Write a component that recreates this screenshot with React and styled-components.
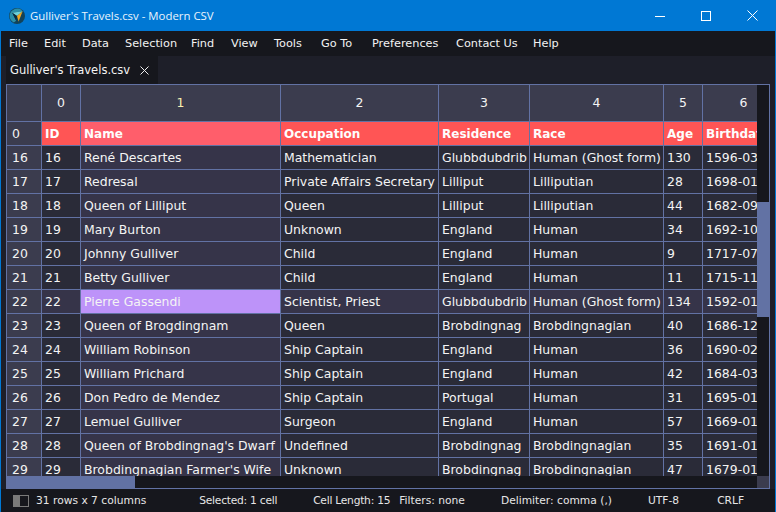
import React from "react";
import styled, { createGlobalStyle } from "styled-components";

const Global = createGlobalStyle`
  html, body { margin: 0; padding: 0; background: #16171d; }
  * { box-sizing: border-box; }
`;

const COLS = [35, 39, 200, 158, 91, 134, 39, 82];

const MENU = [
  ["File", 35], ["Edit", 38], ["Data", 43], ["Selection", 66], ["Find", 40], ["View", 43],
  ["Tools", 47], ["Go To", 51], ["Preferences", 84], ["Contact Us", 77], ["Help", 26],
];

const HEAD = ["ID", "Name", "Occupation", "Residence", "Race", "Age", "Birthdate"];
const ROWS = [
  ["16", "René Descartes", "Mathematician", "Glubbdubdrib", "Human (Ghost form)", "130", "1596-03-31"],
  ["17", "Redresal", "Private Affairs Secretary", "Lilliput", "Lilliputian", "28", "1698-01-01"],
  ["18", "Queen of Lilliput", "Queen", "Lilliput", "Lilliputian", "44", "1682-09-01"],
  ["19", "Mary Burton", "Unknown", "England", "Human", "34", "1692-10-01"],
  ["20", "Johnny Gulliver", "Child", "England", "Human", "9", "1717-07-01"],
  ["21", "Betty Gulliver", "Child", "England", "Human", "11", "1715-11-01"],
  ["22", "Pierre Gassendi", "Scientist, Priest", "Glubbdubdrib", "Human (Ghost form)", "134", "1592-01-22"],
  ["23", "Queen of Brogdingnam", "Queen", "Brobdingnag", "Brobdingnagian", "40", "1686-12-01"],
  ["24", "William Robinson", "Ship Captain", "England", "Human", "36", "1690-02-01"],
  ["25", "William Prichard", "Ship Captain", "England", "Human", "42", "1684-03-01"],
  ["26", "Don Pedro de Mendez", "Ship Captain", "Portugal", "Human", "31", "1695-01-01"],
  ["27", "Lemuel Gulliver", "Surgeon", "England", "Human", "57", "1669-01-01"],
  ["28", "Queen of Brobdingnag's Dwarf", "Undefined", "Brobdingnag", "Brobdingnagian", "35", "1691-01-01"],
  ["29", "Brobdingnagian Farmer's Wife", "Unknown", "Brobdingnag", "Brobdingnagian", "47", "1679-01-01"],
];

const Window = styled.div`
  width: 776px;
  height: 512px;
  display: flex;
  flex-direction: column;
  overflow: hidden;
  background: #1e1f29;
  border: 1px solid #0078d4;
  border-top: 0;
  border-bottom: 0;
  font-family: "DejaVu Sans", sans-serif;
  font-size: 12.45px;
  color: #f4f4f4;
`;
const TitleBar = styled.div`
  height: 31px;
  flex: none;
  display: flex;
  align-items: center;
  background: #0078d4;
  padding-left: 8px;
`;
const TitleText = styled.div`
  margin-left: 5px;
  font-family: "Open Sans", sans-serif;
  font-size: 11.4px;
  color: #eaf4fc;
  flex: 1;
`;
const WinButton = styled.button`
  width: 46px;
  height: 31px;
  padding: 0;
  border: 0;
  background: none;
  display: flex;
  align-items: center;
  justify-content: center;
`;
const MenuBar = styled.div`
  height: 25px;
  flex: none;
  display: flex;
  align-items: center;
  background: #16171d;
  padding-left: 8px;
`;
const MenuItem = styled.span`
  width: ${(p) => p.$w}px;
  font-size: 11.3px;
  color: #f2f2f2;
`;
const TabBar = styled.div`
  height: 28px;
  flex: none;
  display: flex;
  background: #1e1f29;
  padding-left: 5px;
`;
const Tab = styled.div`
  width: 152px;
  display: flex;
  align-items: center;
  background: #16171d;
  padding-left: 4px;
  gap: 10px;
  font-size: 11.5px;
`;
const GridFrame = styled.div`
  margin: 0 5px;
  height: 405px;
  flex: none;
  display: grid;
  grid-template-columns: 750px 12px;
  grid-template-rows: 391px 12px;
  border: 1px solid #6272a4;
  background: #16171d;
`;
const Viewport = styled.div`
  overflow: hidden;
`;
const Table = styled.div`
  display: grid;
  grid-template-columns: ${COLS.map((c) => c + "px").join(" ")};
  grid-auto-rows: 24px;
  grid-template-rows: 37px 24px;
  width: max-content;
`;
const cellBase = `
  border-right: 1px solid #6272a4;
  border-bottom: 1px solid #6272a4;
  white-space: nowrap;
  overflow: hidden;
  line-height: 24px;
  padding-left: 3px;
`;
const ColHead = styled.div`
  ${cellBase}
  line-height: 36px;
  padding-left: 0;
  text-align: center;
  background: #3b3c4e;
  color: ${(p) => (p.$active ? "#f8f0b0" : "#f4f4f4")};
`;
const RowHead = styled.div`
  ${cellBase}
  padding-left: 5px;
  background: #3b3c4e;
`;
const HeadCell = styled.div`
  ${cellBase}
  font-size: 12px;
  font-weight: 700;
  background: ${(p) => (p.$active ? "#ff5e6b" : "#ff5555")};
  color: #fdfdfd;
`;
const Cell = styled.div`
  ${cellBase}
  background: ${(p) =>
    p.$selected ? "#bd93f9" : p.$row || p.$col ? "#363449" : "#2a2b38"};
`;
const VTrack = styled.div`
  padding-top: 117px;
`;
const VThumb = styled.div`
  height: 115px;
  background: #6272a4;
`;
const HTrack = styled.div``;
const HThumb = styled.div`
  width: 128px;
  height: 12px;
  background: #6272a4;
`;
const Corner = styled.div`
  background: #3b3c4e;
`;
const StatusBar = styled.div`
  flex: 1;
  display: flex;
  align-items: center;
  background: #16171d;
  font-size: 10.7px;
  color: #e6e6e6;
  padding-left: 12px;
`;
const StatusIcon = styled.span`
  width: 16px;
  height: 12px;
  display: block;
  background: linear-gradient(90deg, #7a7a7a 0 6px, transparent 6px);
  border: 1px solid #7a7a7a;
  margin-right: 7px;
`;
const Status = styled.span`
  margin-left: ${(p) => p.$gap}px;
  letter-spacing: ${(p) => (p.$tight ? "-0.25px" : "0")};
`;

const Logo = () => (
  <svg width="16" height="16" viewBox="0 0 20 20">
    <circle cx="10" cy="10" r="10" fill="#12435a" />
    <path d="M1 8 A9.5 9.5 0 0 1 15 2 L17 4 L4 6 L9 16 L6 18 A9.5 9.5 0 0 1 1 8Z" fill="#2b8fa8" />
    <path d="M4 6 L17 4 L10 10 Z" fill="#6ed2d8" />
    <path d="M17 4 L12 17 L10 10 Z" fill="#f2a51e" />
    <path d="M4 6 L10 10 L9 16 Z" fill="#0c2b3c" />
  </svg>
);

export default function App() {
  return (
    <>
      <Global />
      <Window>
        <TitleBar>
          <Logo />
          <TitleText>Gulliver's Travels.csv - Modern CSV</TitleText>
          <WinButton aria-label="minimize">
            <svg width="10" height="10"><path d="M0 5.5H10" stroke="#fff" /></svg>
          </WinButton>
          <WinButton aria-label="maximize">
            <svg width="10" height="10"><rect x=".5" y=".5" width="9" height="9" fill="none" stroke="#fff" /></svg>
          </WinButton>
          <WinButton aria-label="close">
            <svg width="11" height="11"><path d="M.5.5L10.5 10.5M10.5.5L.5 10.5" stroke="#fff" /></svg>
          </WinButton>
        </TitleBar>
        <MenuBar>
          {MENU.map(([m, w]) => (
            <MenuItem key={m} $w={w}>{m}</MenuItem>
          ))}
        </MenuBar>
        <TabBar>
          <Tab>
            Gulliver's Travels.csv
            <svg width="9" height="9"><path d="M.5.5L8.5 8.5M8.5.5L.5 8.5" stroke="#eee" fill="none" /></svg>
          </Tab>
        </TabBar>
        <GridFrame>
          <Viewport>
            <Table>
              <ColHead />
              {COLS.slice(1).map((_, i) => (
                <ColHead key={i} $active={i === 1}>{i}</ColHead>
              ))}
              <RowHead>0</RowHead>
              {HEAD.map((h, i) => (
                <HeadCell key={h} $active={i === 1}>{h}</HeadCell>
              ))}
              {ROWS.map((r) => (
                <React.Fragment key={r[0]}>
                  <RowHead>{r[0]}</RowHead>
                  {r.map((c, i) => (
                    <Cell key={i} $col={i === 1} $row={r[0] === "22"} $selected={i === 1 && r[0] === "22"}>{c}</Cell>
                  ))}
                </React.Fragment>
              ))}
            </Table>
          </Viewport>
          <VTrack><VThumb /></VTrack>
          <HTrack><HThumb /></HTrack>
          <Corner />
        </GridFrame>
        <StatusBar>
          <StatusIcon />
          <Status $gap={0}>31 rows x 7 columns</Status>
          <Status $gap={53} $tight>Selected: 1 cell</Status>
          <Status $gap={36} $tight>Cell Length: 15</Status>
          <Status $gap={9}>Filters: none</Status>
          <Status $gap={36}>Delimiter: comma (,)</Status>
          <Status $gap={36}>UTF-8</Status>
          <Status $gap={38}>CRLF</Status>
        </StatusBar>
      </Window>
    </>
  );
}
